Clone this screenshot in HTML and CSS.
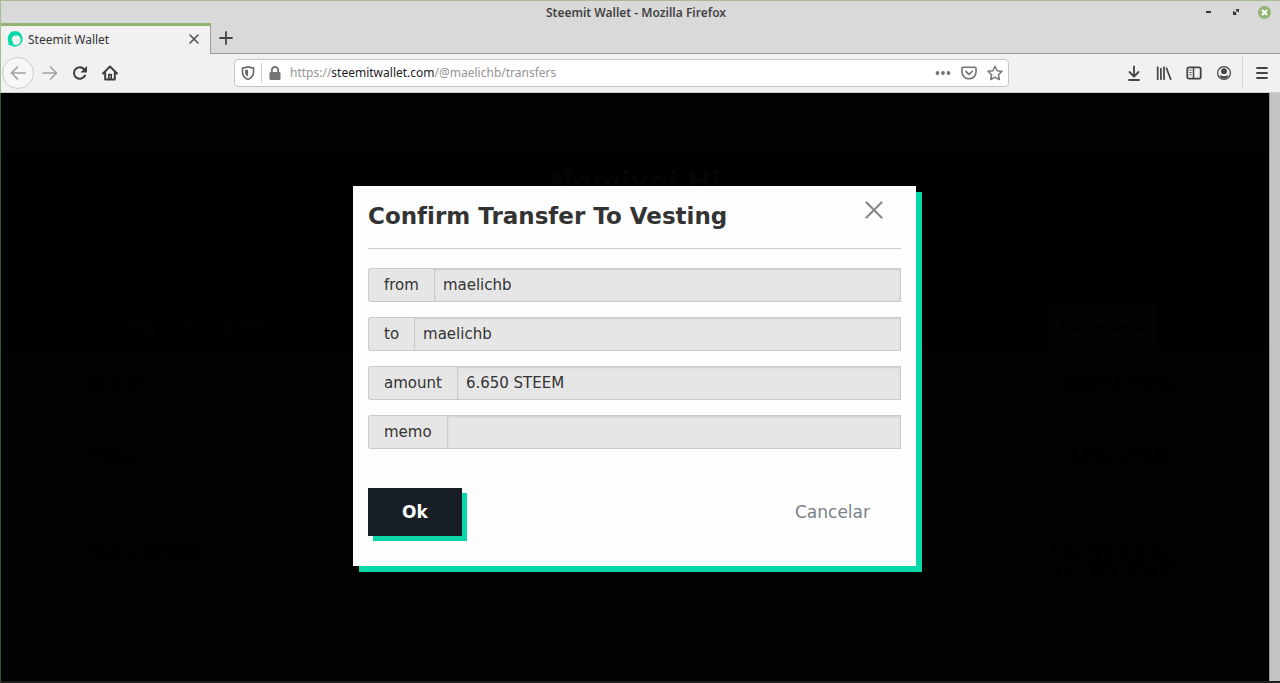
FILE: index.html
```html
<!DOCTYPE html>
<html lang="es">
<head>
<meta charset="utf-8">
<title>Steemit Wallet</title>
<link rel="stylesheet" href="styles.css">
</head>
<body>
<div class="window">
  <header class="titlebar">
    <span></span>
    <span class="window-title">Steemit Wallet - Mozilla Firefox</span>
    <div class="window-controls">
      <button class="icon-btn" aria-label="Minimize"><svg width="13" height="13" viewBox="0 0 13 13"><path d="M4 6h5" stroke="#333" stroke-width="2"/></svg></button>
      <button class="icon-btn" aria-label="Maximize"><svg width="13" height="13" viewBox="0 0 13 13"><path d="M5.500 3H9v3.500L7.800 5.300 7 6 6 5l.7-.8zM3 4.500L4.200 6 5 5.500 6.500 7l-.6.800L7 9H3z" fill="#333"/></svg></button>
      <button class="icon-btn" aria-label="Close window"><svg width="13" height="13" viewBox="0 0 13 13"><circle cx="6.500" cy="6.500" r="6.500" fill="#92b372"/><path d="M4 4l5 5M9 4L4 9" stroke="#fff" stroke-width="2"/></svg></button>
    </div>
  </header>

  <div class="tabs">
    <div class="tab">
      <svg width="16" height="16" viewBox="0 0 16 16"><path d="M1.200 13.500C2.300 12 0 9 1 6C2 2 5 0 8 .4C11 0 14 2 15 5C16.500 9 15 14 10.500 15C8 16 5.500 15.800 4.500 14.500C3.500 14.500 2 14.300 1.200 13.500Z" fill="#07d7a9"/><path d="M5 9.500C4.200 6.500 6.500 4.500 9 4.500C11.800 4 13.800 6 13.600 9C13.500 12 11.500 14 9 14C6.500 14.200 5.500 13 6 11.500C6.200 10.500 5.300 10.500 5 9.500Z" fill="#f1f1f1"/></svg>
      <span class="tab-title">Steemit Wallet</span>
      <button class="icon-btn" aria-label="Close tab"><svg width="16" height="16" viewBox="0 0 16 16"><path d="M4 4l8 8M12 4l-8 8" stroke="#4c4c4c" stroke-width="1.500" stroke-linecap="round"/></svg></button>
    </div>
    <button class="icon-btn new-tab" aria-label="New tab"><svg width="16" height="16" viewBox="0 0 16 16"><path d="M8 2v12M2 8h12" stroke="#444" stroke-width="1.800" stroke-linecap="round"/></svg></button>
  </div>

  <nav class="toolbar" aria-label="Navigation">
    <div class="nav-buttons">
      <button class="icon-btn back" aria-label="Back"><svg width="16" height="16" viewBox="0 0 16 16" fill="none" stroke="#a3a3a3" stroke-width="1.700" stroke-linecap="round" stroke-linejoin="round"><path d="M15 8H1.500M7.500 2L1.500 8l6 6"/></svg></button>
      <button class="icon-btn" aria-label="Forward"><svg width="16" height="16" viewBox="0 0 16 16" fill="none" stroke="#a3a3a3" stroke-width="1.700" stroke-linecap="round" stroke-linejoin="round"><path d="M1 8h13.500M8.500 2l6 6-6 6"/></svg></button>
      <button class="icon-btn" aria-label="Reload"><svg width="16" height="16" viewBox="0 0 16 16"><path d="M13 10.500A5.800 5.800 0 1 1 12 4" fill="none" stroke="#3e3e3e" stroke-width="2" stroke-linecap="round"/><path d="M15 1v6.500H8.500z" fill="#3e3e3e"/></svg></button>
      <button class="icon-btn" aria-label="Home"><svg width="16" height="16" viewBox="0 0 16 16" fill="none" stroke="#3e3e3e" stroke-linecap="round" stroke-linejoin="round"><path d="M1 8.500L8 1.500l7 7M3.200 8v6.500h9.600V8" stroke-width="2"/><path d="M6.800 14V9.500h2.400V14" stroke-width="1.600"/></svg></button>
    </div>

    <div class="urlbar">
      <svg width="16" height="16" viewBox="0 0 16 16"><path d="M8 1.800C10 2.700 12 3 13.500 3v4c0 4-2.300 6-5.500 7.600C4.800 13 2.500 11 2.500 7V3C4 3 6 2.700 8 1.800z" fill="none" stroke="#686868" stroke-width="1.600"/><path d="M8 4.500v7.300C6 10.500 5 9 5 7V5.200C6 5.200 7 5 8 4.500z" fill="#686868"/></svg>
      <span class="url-divider"></span>
      <svg width="16" height="16" viewBox="0 0 16 16"><rect x="2.500" y="7" width="11" height="8" rx="1.300" fill="#747474"/><path d="M4.800 8V5.200a3.200 3.200 0 0 1 6.400 0V8" fill="none" stroke="#747474" stroke-width="1.900"/></svg>
      <span class="url">https://<b>steemitwallet.com</b>/@maelichb/transfers</span>
      <button class="icon-btn" aria-label="Page actions"><svg width="16" height="16" viewBox="0 0 16 16" fill="#747474"><circle cx="2.500" cy="8" r="1.900"/><circle cx="8" cy="8" r="1.900"/><circle cx="13.500" cy="8" r="1.900"/></svg></button>
      <button class="icon-btn" aria-label="Save to Pocket"><svg width="16" height="16" viewBox="0 0 16 16" fill="none" stroke="#747474" stroke-width="1.600" stroke-linecap="round" stroke-linejoin="round"><path d="M2 2.200h12q1 0 1 1V7a7 6.800 0 0 1-14 0V3.200q0-1 1-1z"/><path d="M4.800 6.300L8 9.300l3.200-3"/></svg></button>
      <button class="icon-btn" aria-label="Bookmark"><svg width="16" height="16" viewBox="0 0 16 16" fill="none" stroke="#747474" stroke-width="1.500" stroke-linejoin="round"><path d="M8 1.200l2.100 4.500 4.900.6-3.600 3.400.9 4.900L8 12.200l-4.300 2.400.9-4.900L1 6.300l4.900-.6z"/></svg></button>
    </div>

    <div class="tools">
      <button class="icon-btn" aria-label="Downloads"><svg width="16" height="16" viewBox="0 0 16 16" fill="none" stroke="#444" stroke-width="1.800" stroke-linecap="round" stroke-linejoin="round"><path d="M8 1.500v9.800M3.500 7L8 11.500 12.500 7M3 15h10"/></svg></button>
      <button class="icon-btn" aria-label="Library"><svg width="16" height="16" viewBox="0 0 16 16" fill="none" stroke="#444" stroke-width="1.700" stroke-linecap="round"><path d="M1.700 2.200v12M4.900 3.500v10.700M8 2.200v12M10.500 3.200l4.200 11"/></svg></button>
      <button class="icon-btn" aria-label="Sidebar"><svg width="16" height="16" viewBox="0 0 16 16" fill="none" stroke="#444"><rect x="1.300" y="2.300" width="13.400" height="11.400" rx="1.800" stroke-width="1.800"/><path d="M7.500 2.500v11" stroke-width="1.500"/><path d="M3.500 5.200h2M3.500 7.500h2M3.500 9.800h2"/></svg></button>
      <button class="icon-btn" aria-label="Account"><svg width="16" height="16" viewBox="0 0 16 16"><circle cx="8" cy="8" r="6.400" fill="none" stroke="#444" stroke-width="1.200"/><circle cx="8" cy="6.200" r="2.900" fill="#444"/><path d="M3.600 10.200c2 .2 2.400 1 4.400 1s2.400-.8 4.400-1c-.8 2.500-2.500 3.300-4.400 3.300s-3.600-.8-4.400-3.300z" fill="#444"/></svg></button>
    </div>
    <button class="icon-btn menu" aria-label="Menu"><svg width="16" height="16" viewBox="0 0 16 16" stroke="#444" stroke-width="1.800" stroke-linecap="round"><path d="M3 3h10M3 8h10M3 13h10"/></svg></button>
  </nav>

  <div class="viewport">
    <main class="page">
      <div class="site-header">
        <span class="brand"><svg width="34" height="34" viewBox="0 0 34 34"><circle cx="17" cy="17" r="14" fill="none" stroke="#000302" stroke-width="4"/></svg>steemit wallet</span>
        <svg class="site-menu" width="20" height="16" viewBox="0 0 20 16" stroke="#000" stroke-width="2"><path d="M0 1h20M0 8h20M0 15h20"/></svg>
      </div>
      <div class="banner">Nomivoi Hi</div>
      <div class="site-nav">
        <span class="site-links"><span>Blog</span><span>Recompensa -</span></span>
        <span class="site-tab">Monedero</span>
      </div>
      <div class="balances">
        <div class="balance"><b>Saldos</b><span>COMPRA STEEM</span></div>
        <div class="balance"><span>STEEM</span><span>6.650 STEEM -</span></div>
        <div class="balance"><span>STEEM POWER</span><span>136.272 STEEM -<br>(+11.382 STEEM)</span></div>
      </div>
    </main>
    <div class="scrollbar"></div>

    <div class="overlay">
      <form class="modal" role="dialog" aria-labelledby="dialog-title">
        <div class="modal-head">
          <h1 id="dialog-title">Confirm Transfer To Vesting</h1>
          <button type="button" class="icon-btn modal-close" aria-label="Close"><svg width="18" height="18" viewBox="0 0 18 18"><path d="M1.500 1.500l15 15M16.500 1.500l-15 15" stroke="#898989" stroke-width="2.200" stroke-linecap="round"/></svg></button>
        </div>
        <div class="fields">
          <div class="field"><label for="from">from</label><input id="from" value="maelichb" readonly></div>
          <div class="field"><label for="to">to</label><input id="to" value="maelichb" readonly></div>
          <div class="field"><label for="amount">amount</label><input id="amount" value="6.650 STEEM" readonly></div>
          <div class="field"><label for="memo">memo</label><input id="memo" value="" readonly></div>
        </div>
        <div class="actions">
          <button type="button" class="ok">Ok</button>
          <button type="button" class="cancel">Cancelar</button>
        </div>
      </form>
    </div>
  </div>
</div>
</body>
</html>
```

FILE: styles.css
```css
* {
  box-sizing: border-box;
}

body {
  margin: 0;
  font-family: "DejaVu Sans", sans-serif;
  font-size: 15px;
  color: #333;
}

button {
  font: inherit;
  border: 0;
  background: none;
  padding: 0;
}

svg {
  display: block;
  flex: none;
}

.window {
  display: flex;
  flex-direction: column;
  min-height: 100vh;
  background: #f1f1f1;
  border-top: 1px solid #a8bd94;
  border-left: 1px solid #a8bd94;
}

.icon-btn {
  display: flex;
  align-items: center;
  justify-content: center;
}

.titlebar {
  display: grid;
  grid-template-columns: 1fr auto 1fr;
  align-items: center;
  height: 22px;
  padding-right: 9px;
  background: #d9d9d9;
}

.window-title {
  font: 600 12px "Noto Sans", sans-serif;
  color: #444;
}

.window-controls {
  display: flex;
  justify-content: flex-end;
  gap: 15px;
}

.tabs {
  display: flex;
  height: 31px;
  background: #d9d9d9;
  box-shadow: inset 0 -1px #999;
  font: 12px "Noto Sans", sans-serif;
}

.tab {
  display: flex;
  align-items: center;
  gap: 5px;
  width: 210px;
  padding: 0 8px 2px 6px;
  background: #f1f1f1;
  border-top: 3px solid #92b372;
  border-right: 1px solid #999;
}

.tab-title {
  flex: 1;
}

.new-tab {
  width: 29px;
  padding-bottom: 1px;
}

.toolbar {
  display: flex;
  align-items: center;
  height: 39px;
  padding-bottom: 1px;
  border-bottom: 1px solid #ccc;
}

.nav-buttons {
  display: flex;
  align-items: center;
  gap: 14px;
  width: 233px;
  padding-left: 1px;
}

.back {
  width: 32px;
  height: 32px;
  margin-right: -6px;
  border: 1px solid #ccc;
  border-radius: 50%;
  background: #f7f7f7;
}

.urlbar {
  display: flex;
  align-items: center;
  flex: 1;
  gap: 10px;
  height: 28px;
  padding: 0 5px;
  background: #fff;
  border: 1px solid #c4c4c4;
  border-radius: 4px;
}

.url-divider {
  width: 1px;
  height: 20px;
  margin: 0 -5px;
  background: #ccc;
}

.url {
  flex: 1;
  margin-left: -3px;
  font: 12px "Noto Sans", sans-serif;
  color: #949494;
}

.url b {
  font-weight: 400;
  color: #222;
}

.tools {
  display: flex;
  gap: 14px;
  padding: 0 10px 0 117px;
}

.menu {
  align-self: stretch;
  width: 38px;
  margin: 3px 0;
  border-left: 1px solid #d5d5d5;
}

.viewport {
  position: relative;
  display: flex;
  flex: 1;
  margin-left: -1px;
  background: #020202;
  border-left: 1px solid #3d5428;
  border-bottom: 2px solid #1e1e1e;
}

.page {
  flex: 1;
  color: #000;
}

.scrollbar {
  width: 11px;
  background: #c4c4c4;
  border-left: 1px solid #999;
}

.site-header {
  display: flex;
  align-items: center;
  justify-content: space-between;
  height: 60px;
  padding: 0 2px 0 12px;
}

.brand {
  display: flex;
  align-items: center;
  gap: 10px;
  font-size: 23px;
  color: #000302;
}

.banner {
  height: 152px;
  padding-top: 13px;
  background: #000;
  color: #050505;
  font-size: 28px;
  font-weight: 700;
  text-align: center;
}

.site-nav {
  display: flex;
  justify-content: space-between;
  align-items: stretch;
  height: 44px;
  padding: 0 112px 0 123px;
  background: #000;
  color: #040404;
}

.site-links {
  display: flex;
  align-items: center;
  gap: 20px;
}

.site-tab {
  display: flex;
  align-items: center;
  padding: 0 12px;
  background: #030303;
  color: #000;
  font-weight: 700;
}

.balances {
  display: grid;
  gap: 54px;
  padding: 26px 91px 0 86px;
}

.balance {
  display: flex;
  justify-content: space-between;
  text-align: right;
}

.balance + .balance {
  min-height: 43px;
}

.overlay {
  position: absolute;
  inset: 0 12px 0 0;
  padding: 93px 15px 0;
}

.modal {
  max-width: 563px;
  margin: 0 auto;
  padding: 15px 15px 30px;
  background: #fefefe;
  box-shadow: 6px 6px #07d7a9;
}

.modal-head {
  display: flex;
  justify-content: space-between;
  height: 48px;
  padding-right: 18px;
  border-bottom: 1px solid #ccc;
}

.modal-head h1 {
  margin: 0;
  font-size: 23px;
  line-height: 30px;
}

.modal-close {
  height: 18px;
}

.fields {
  display: grid;
  gap: 15px;
  padding: 19px 0 39px;
}

.field {
  display: flex;
  height: 34px;
}

.field label {
  display: flex;
  align-items: center;
  padding: 0 15px;
  background: #e6e6e6;
  border: 1px solid #cacaca;
  border-right: 0;
  border-radius: 3px 0 0 3px;
}

.field input {
  flex: 1;
  min-width: 0;
  padding: 0 8px;
  font: inherit;
  color: inherit;
  background: #e6e6e6;
  border: 1px solid #cacaca;
  border-radius: 0;
  box-shadow: inset 0 1px 2px rgba(10, 10, 10, 0.1);
  outline: 0;
}

.actions {
  display: flex;
  justify-content: space-between;
  align-items: center;
  padding-right: 31px;
  font-size: 17px;
}

.ok {
  width: 94px;
  height: 48px;
  background: #171f24;
  color: #fff;
  font-weight: 700;
  box-shadow: 5px 5px #07d7a9;
}

.cancel {
  color: #788187;
}
```
